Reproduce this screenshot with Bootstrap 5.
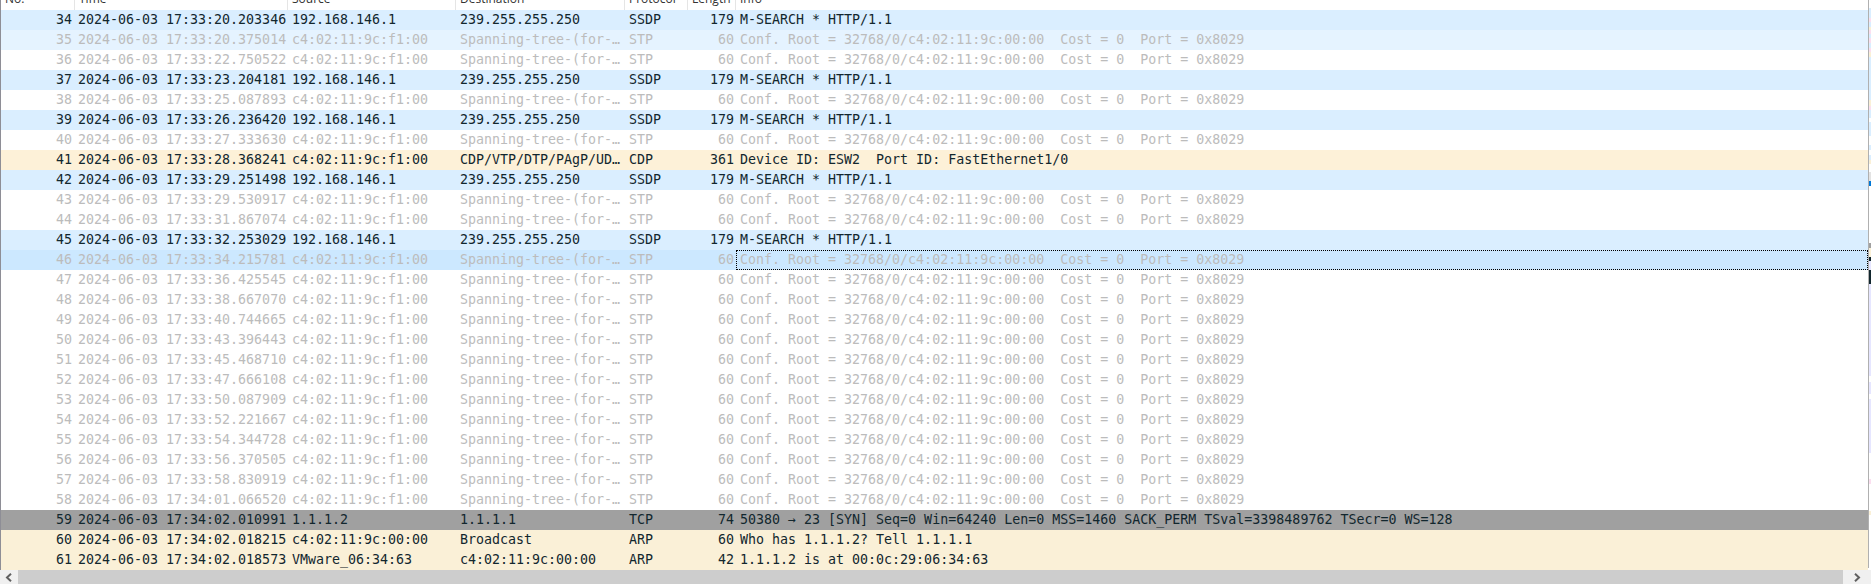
<!DOCTYPE html>
<html lang="en">
<head>
<meta charset="utf-8">
<title>Packet list</title>
<link href="https://cdn.jsdelivr.net/npm/bootstrap@5.3.0/dist/css/bootstrap.min.css" rel="stylesheet">
<style>
html,body{height:584px;overflow:hidden;background:#fff}
.shell{height:584px;width:1871px}
.pane{height:570px;min-height:0}
.listbox{width:1868px;border-left:1px solid #8e8e96}
.pkt{table-layout:fixed;width:1867px;border-collapse:separate;border-spacing:0;font-family:"DejaVu Sans Mono",monospace;font-size:13.3px;--bs-table-bg:transparent}
.pkt>colgroup .c1{width:74px}.pkt>colgroup .c2{width:213px}.pkt>colgroup .c3{width:168px}.pkt>colgroup .c4{width:169px}.pkt>colgroup .c5{width:63px}.pkt>colgroup .c6{width:48px}
.pkt>thead>tr>th{height:10px;padding:0;border:0;background:#fff;color:#333;font:400 12px/14px "Open Sans",sans-serif;overflow:hidden;vertical-align:top;border-right:1px solid #e5e5e5}
.pkt>thead>tr>th:last-child{border-right:0}
.hd{display:block;margin-top:-8px;padding-left:4px;height:18px;white-space:nowrap}
.pkt>tbody>tr>td{height:20px;padding:0 3px 0 4px;border:0;line-height:20px;white-space:nowrap;overflow:hidden;background:transparent;color:inherit;box-shadow:none;vertical-align:top}
.pkt>tbody>tr>td:nth-child(2){padding-left:3px}
.pkt>tbody>tr>td.num{text-align:right;padding:0 2px 0 0}
.pkt>tbody>tr>td.num1{padding-right:3px}
.ign{color:#bcbcbc}
.udp{background:#daeeff;color:#12272e}
.hov{background:#e5f3ff}
.sel{background:#cce8ff}
.cdp{background:#fdf1d8;color:#12272e}
.syn{background:#a0a0a0;color:#12272e}
.arp{background:#faf0d7;color:#12272e}
.pkt>tbody>tr:last-child>td{height:19px;line-height:20px}
.pkt>tbody>tr>td.focus{outline:1px dotted #000;outline-offset:-1px}
.rule{width:1px;background:#b0b0b0;height:568px}
.strip{width:2px;height:568px;background:linear-gradient(to bottom,
#fff 0 8px,#daeeff 8px 18px,#fbdff0 18px 22px,#daeeff 22px 27px,#faf0d7 27px 30px,#fbdff0 30px 34px,#daeeff 34px 38px,#fbdff0 38px 43px,#daeeff 43px 48px,#fbdff0 48px 52px,#faf0d7 52px 57px,#daeeff 57px 100px,#faf0d7 100px 106px,#fbdff0 106px 110px,#daeeff 110px 118px,#fff 118px 122px,#daeeff 122px 136px,#fff 136px 145px,#daeeff 145px 150px,#fff 150px 155px,#daeeff 155px 160px,#faf0d7 160px 164px,#fff 164px 172px,#e3e3e3 172px 181px,#0078d7 181px 186px,#fff 186px 243px,#a0a0a0 243px 248px,#faf0d7 248px 257px,#12272e 257px 261px,#e6e6ff 261px 270px,#12272e 270px 284px,#e6e6ff 284px 376px,#fff 376px 382px,#e6e6ff 382px 394px,#fff 394px 399px,#e6e6ff 399px 453px,#fff 453px 479px,#fbdff0 479px 484px,#fff 484px 511px,#faf0d7 511px 515px,#fff 515px)}
.hbar{height:14px}
.sbtn{background:#f0f0f0}
.sleft{width:18px}.sright{width:28px}
.strack{background:#cdcdcd}
</style>
</head>
<body>
<div class="shell d-flex flex-column">
  <div class="pane d-flex">
    <div class="listbox overflow-hidden">
      <table class="table table-borderless mb-0 pkt">
        <colgroup><col class="c1"><col class="c2"><col class="c3"><col class="c4"><col class="c5"><col class="c6"><col></colgroup>
        <thead><tr><th><span class="hd">No.</span></th><th><span class="hd">Time</span></th><th><span class="hd">Source</span></th><th><span class="hd">Destination</span></th><th><span class="hd">Protocol</span></th><th><span class="hd">Length</span></th><th><span class="hd">Info</span></th></tr></thead>
        <tbody>
<tr class="udp"><td class="num num1">34</td><td>2024-06-03 17:33:20.203346</td><td>192.168.146.1</td><td>239.255.255.250</td><td>SSDP</td><td class="num">179</td><td>M-SEARCH * HTTP/1.1</td></tr>
<tr class="hov ign"><td class="num num1">35</td><td>2024-06-03 17:33:20.375014</td><td>c4:02:11:9c:f1:00</td><td>Spanning-tree-(for-…</td><td>STP</td><td class="num">60</td><td>Conf. Root = 32768/0/c4:02:11:9c:00:00&nbsp; Cost = 0&nbsp; Port = 0x8029</td></tr>
<tr class="ign"><td class="num num1">36</td><td>2024-06-03 17:33:22.750522</td><td>c4:02:11:9c:f1:00</td><td>Spanning-tree-(for-…</td><td>STP</td><td class="num">60</td><td>Conf. Root = 32768/0/c4:02:11:9c:00:00&nbsp; Cost = 0&nbsp; Port = 0x8029</td></tr>
<tr class="udp"><td class="num num1">37</td><td>2024-06-03 17:33:23.204181</td><td>192.168.146.1</td><td>239.255.255.250</td><td>SSDP</td><td class="num">179</td><td>M-SEARCH * HTTP/1.1</td></tr>
<tr class="ign"><td class="num num1">38</td><td>2024-06-03 17:33:25.087893</td><td>c4:02:11:9c:f1:00</td><td>Spanning-tree-(for-…</td><td>STP</td><td class="num">60</td><td>Conf. Root = 32768/0/c4:02:11:9c:00:00&nbsp; Cost = 0&nbsp; Port = 0x8029</td></tr>
<tr class="udp"><td class="num num1">39</td><td>2024-06-03 17:33:26.236420</td><td>192.168.146.1</td><td>239.255.255.250</td><td>SSDP</td><td class="num">179</td><td>M-SEARCH * HTTP/1.1</td></tr>
<tr class="ign"><td class="num num1">40</td><td>2024-06-03 17:33:27.333630</td><td>c4:02:11:9c:f1:00</td><td>Spanning-tree-(for-…</td><td>STP</td><td class="num">60</td><td>Conf. Root = 32768/0/c4:02:11:9c:00:00&nbsp; Cost = 0&nbsp; Port = 0x8029</td></tr>
<tr class="cdp"><td class="num num1">41</td><td>2024-06-03 17:33:28.368241</td><td>c4:02:11:9c:f1:00</td><td>CDP/VTP/DTP/PAgP/UD…</td><td>CDP</td><td class="num">361</td><td>Device ID: ESW2&nbsp; Port ID: FastEthernet1/0</td></tr>
<tr class="udp"><td class="num num1">42</td><td>2024-06-03 17:33:29.251498</td><td>192.168.146.1</td><td>239.255.255.250</td><td>SSDP</td><td class="num">179</td><td>M-SEARCH * HTTP/1.1</td></tr>
<tr class="ign"><td class="num num1">43</td><td>2024-06-03 17:33:29.530917</td><td>c4:02:11:9c:f1:00</td><td>Spanning-tree-(for-…</td><td>STP</td><td class="num">60</td><td>Conf. Root = 32768/0/c4:02:11:9c:00:00&nbsp; Cost = 0&nbsp; Port = 0x8029</td></tr>
<tr class="ign"><td class="num num1">44</td><td>2024-06-03 17:33:31.867074</td><td>c4:02:11:9c:f1:00</td><td>Spanning-tree-(for-…</td><td>STP</td><td class="num">60</td><td>Conf. Root = 32768/0/c4:02:11:9c:00:00&nbsp; Cost = 0&nbsp; Port = 0x8029</td></tr>
<tr class="udp"><td class="num num1">45</td><td>2024-06-03 17:33:32.253029</td><td>192.168.146.1</td><td>239.255.255.250</td><td>SSDP</td><td class="num">179</td><td>M-SEARCH * HTTP/1.1</td></tr>
<tr class="sel ign"><td class="num num1">46</td><td>2024-06-03 17:33:34.215781</td><td>c4:02:11:9c:f1:00</td><td>Spanning-tree-(for-…</td><td>STP</td><td class="num">60</td><td class="focus">Conf. Root = 32768/0/c4:02:11:9c:00:00&nbsp; Cost = 0&nbsp; Port = 0x8029</td></tr>
<tr class="ign"><td class="num num1">47</td><td>2024-06-03 17:33:36.425545</td><td>c4:02:11:9c:f1:00</td><td>Spanning-tree-(for-…</td><td>STP</td><td class="num">60</td><td>Conf. Root = 32768/0/c4:02:11:9c:00:00&nbsp; Cost = 0&nbsp; Port = 0x8029</td></tr>
<tr class="ign"><td class="num num1">48</td><td>2024-06-03 17:33:38.667070</td><td>c4:02:11:9c:f1:00</td><td>Spanning-tree-(for-…</td><td>STP</td><td class="num">60</td><td>Conf. Root = 32768/0/c4:02:11:9c:00:00&nbsp; Cost = 0&nbsp; Port = 0x8029</td></tr>
<tr class="ign"><td class="num num1">49</td><td>2024-06-03 17:33:40.744665</td><td>c4:02:11:9c:f1:00</td><td>Spanning-tree-(for-…</td><td>STP</td><td class="num">60</td><td>Conf. Root = 32768/0/c4:02:11:9c:00:00&nbsp; Cost = 0&nbsp; Port = 0x8029</td></tr>
<tr class="ign"><td class="num num1">50</td><td>2024-06-03 17:33:43.396443</td><td>c4:02:11:9c:f1:00</td><td>Spanning-tree-(for-…</td><td>STP</td><td class="num">60</td><td>Conf. Root = 32768/0/c4:02:11:9c:00:00&nbsp; Cost = 0&nbsp; Port = 0x8029</td></tr>
<tr class="ign"><td class="num num1">51</td><td>2024-06-03 17:33:45.468710</td><td>c4:02:11:9c:f1:00</td><td>Spanning-tree-(for-…</td><td>STP</td><td class="num">60</td><td>Conf. Root = 32768/0/c4:02:11:9c:00:00&nbsp; Cost = 0&nbsp; Port = 0x8029</td></tr>
<tr class="ign"><td class="num num1">52</td><td>2024-06-03 17:33:47.666108</td><td>c4:02:11:9c:f1:00</td><td>Spanning-tree-(for-…</td><td>STP</td><td class="num">60</td><td>Conf. Root = 32768/0/c4:02:11:9c:00:00&nbsp; Cost = 0&nbsp; Port = 0x8029</td></tr>
<tr class="ign"><td class="num num1">53</td><td>2024-06-03 17:33:50.087909</td><td>c4:02:11:9c:f1:00</td><td>Spanning-tree-(for-…</td><td>STP</td><td class="num">60</td><td>Conf. Root = 32768/0/c4:02:11:9c:00:00&nbsp; Cost = 0&nbsp; Port = 0x8029</td></tr>
<tr class="ign"><td class="num num1">54</td><td>2024-06-03 17:33:52.221667</td><td>c4:02:11:9c:f1:00</td><td>Spanning-tree-(for-…</td><td>STP</td><td class="num">60</td><td>Conf. Root = 32768/0/c4:02:11:9c:00:00&nbsp; Cost = 0&nbsp; Port = 0x8029</td></tr>
<tr class="ign"><td class="num num1">55</td><td>2024-06-03 17:33:54.344728</td><td>c4:02:11:9c:f1:00</td><td>Spanning-tree-(for-…</td><td>STP</td><td class="num">60</td><td>Conf. Root = 32768/0/c4:02:11:9c:00:00&nbsp; Cost = 0&nbsp; Port = 0x8029</td></tr>
<tr class="ign"><td class="num num1">56</td><td>2024-06-03 17:33:56.370505</td><td>c4:02:11:9c:f1:00</td><td>Spanning-tree-(for-…</td><td>STP</td><td class="num">60</td><td>Conf. Root = 32768/0/c4:02:11:9c:00:00&nbsp; Cost = 0&nbsp; Port = 0x8029</td></tr>
<tr class="ign"><td class="num num1">57</td><td>2024-06-03 17:33:58.830919</td><td>c4:02:11:9c:f1:00</td><td>Spanning-tree-(for-…</td><td>STP</td><td class="num">60</td><td>Conf. Root = 32768/0/c4:02:11:9c:00:00&nbsp; Cost = 0&nbsp; Port = 0x8029</td></tr>
<tr class="ign"><td class="num num1">58</td><td>2024-06-03 17:34:01.066520</td><td>c4:02:11:9c:f1:00</td><td>Spanning-tree-(for-…</td><td>STP</td><td class="num">60</td><td>Conf. Root = 32768/0/c4:02:11:9c:00:00&nbsp; Cost = 0&nbsp; Port = 0x8029</td></tr>
<tr class="syn"><td class="num num1">59</td><td>2024-06-03 17:34:02.010991</td><td>1.1.1.2</td><td>1.1.1.1</td><td>TCP</td><td class="num">74</td><td>50380 → 23 [SYN] Seq=0 Win=64240 Len=0 MSS=1460 SACK_PERM TSval=3398489762 TSecr=0 WS=128</td></tr>
<tr class="arp"><td class="num num1">60</td><td>2024-06-03 17:34:02.018215</td><td>c4:02:11:9c:00:00</td><td>Broadcast</td><td>ARP</td><td class="num">60</td><td>Who has 1.1.1.2? Tell 1.1.1.1</td></tr>
<tr class="arp"><td class="num num1">61</td><td>2024-06-03 17:34:02.018573</td><td>VMware_06:34:63</td><td>c4:02:11:9c:00:00</td><td>ARP</td><td class="num">42</td><td>1.1.1.2 is at 00:0c:29:06:34:63</td></tr>
        </tbody>
      </table>
    </div>
    <div class="rule"></div>
    <div class="strip"></div>
  </div>
  <div class="hbar d-flex">
    <div class="sbtn sleft d-flex align-items-center justify-content-center">
      <svg width="8" height="9" viewBox="0 0 8 9"><path d="M6 .8 2 4.5 6 8.2" fill="none" stroke="#606060" stroke-width="2"/></svg>
    </div>
    <div class="strack flex-grow-1"></div>
    <div class="sbtn sright d-flex align-items-center justify-content-center">
      <svg width="8" height="9" viewBox="0 0 8 9"><path d="M2 .8 6 4.5 2 8.2" fill="none" stroke="#606060" stroke-width="2"/></svg>
    </div>
  </div>
</div>
<script src="https://cdn.jsdelivr.net/npm/bootstrap@5.3.0/dist/js/bootstrap.bundle.min.js"></script>
</body>
</html>
